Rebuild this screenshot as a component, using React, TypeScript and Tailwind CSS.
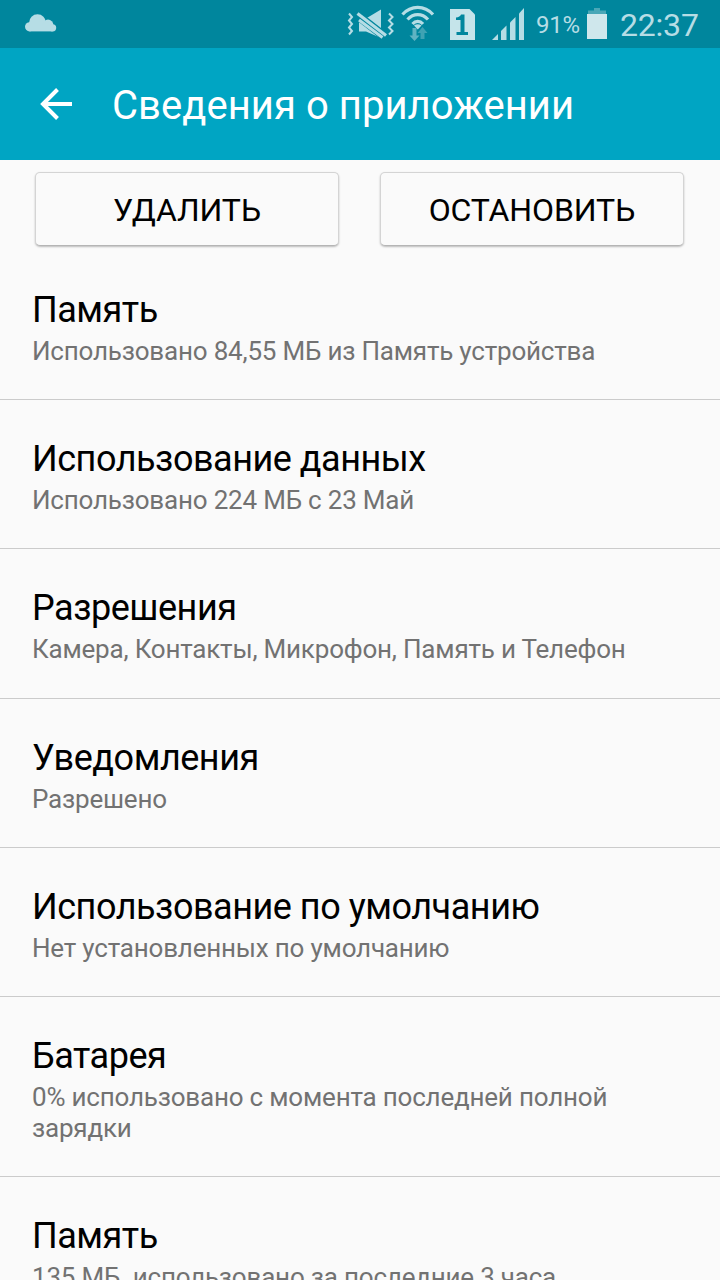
const settings = [
  { title: "Память", summary: "Использовано 84,55 МБ из Память устройства" },
  { title: "Использование данных", summary: "Использовано 224 МБ с 23 Май" },
  { title: "Разрешения", summary: "Камера, Контакты, Микрофон, Память и Телефон" },
  { title: "Уведомления", summary: "Разрешено" },
  { title: "Использование по умолчанию", summary: "Нет установленных по умолчанию" },
  { title: "Батарея", summary: "0% использовано с момента последней полной зарядки" },
  { title: "Память", summary: "135 МБ  использовано за последние 3 часа" },
];

const CloudIcon = () => (
  <svg width="32" height="18" viewBox="0 0 32 18" fill="#b6dde5">
    <circle cx="4.6" cy="12.8" r="4.6" />
    <circle cx="12.5" cy="8.6" r="8.4" />
    <circle cx="23" cy="11" r="5.4" />
    <circle cx="27.6" cy="13.8" r="3.6" />
    <rect x="4.6" y="11" width="23" height="6.4" />
  </svg>
);

const MuteIcon = () => (
  <svg width="48" height="32" viewBox="0 0 48 32" fill="none">
    <path d="M13 9.5H20L35 0.5V29L20 22.5H13Z" fill="#b6dde5" />
    <path d="M11 6L38 27" stroke="#00869d" strokeWidth="9" />
    <path d="M11.500 4.500L40 26.500" stroke="#b6dde5" strokeWidth="3.2" />
    <path d="M13 11L36.500 28.500" stroke="#b6dde5" strokeWidth="3" />
    <path d="M3 4.500L6 8L3 11.500L6 15L3 18.500L6 22L3 25.500" stroke="#b6dde5" strokeWidth="2" />
    <path d="M43 4.500L46.500 8L43 11.500L46.500 15L43 18.500L46.500 22L43 25.500" stroke="#b6dde5" strokeWidth="2" />
  </svg>
);

const WifiIcon = () => (
  <svg width="34" height="38" viewBox="0 0 34 38" fill="none">
    <g stroke="#b6dde5" strokeWidth="3.2">
      <path d="M1.500 9.500C10 0 23.500 0 32 9.500" />
      <path d="M6.500 14.500C12.500 8 21 8 27 14.500" />
      <path d="M11.500 19C14.500 15.500 19 15.500 22 19" />
    </g>
    <path d="M13 20.500Q16.800 18 20.500 20.500L16.800 24.500Z" fill="#b6dde5" />
    <path d="M11.500 23H15.500V30.500H18.500L13.500 36L8.500 30.500H11.500Z" fill="#5fb3c2" />
    <path d="M19.500 34V28H16.500L21.500 22L26.500 28H23.500V34Z" fill="#3fa2b3" />
  </svg>
);

const SimIcon = () => (
  <svg width="26" height="32" viewBox="0 0 26 32">
    <path d="M0 0H19.500L25 5.500V31H0Z" fill="#c5e4ea" />
    <path d="M6 8.500Q10 8 11 5.500H14.500V23H18V26H6.500V23H10.500V11H6Z" fill="#00869d" />
  </svg>
);

const SignalIcon = () => (
  <svg width="33" height="32" viewBox="0 0 33 32" fill="#b6dde5">
    <path d="M0 32L6 26V32Z" />
    <path d="M9 23L14.500 17.500V32H9Z" />
    <path d="M18 14.500L23.500 9V32H18Z" />
    <path d="M27 5.500L32 0V32H27Z" />
  </svg>
);

const BatteryIcon = () => (
  <svg width="20" height="32" viewBox="0 0 20 32">
    <path d="M7 0H13V2.500H19V6H1V2.500H7Z" fill="#4aa7b7" />
    <rect y="6" width="20" height="25" fill="#cfe7ec" />
  </svg>
);

const ArrowIcon = () => (
  <svg width="32" height="32" viewBox="0 0 32 32" fill="none" stroke="#fff" strokeWidth="4">
    <path d="M17.500 1.500L3 16L17.500 30.500M3 16H32" />
  </svg>
);

const StatusBar = () => (
  <div className="flex h-12 items-start bg-[#00869d] pl-[25px] text-[#b6dde5]">
    <div className="pt-3.5">
      <CloudIcon />
    </div>
    <div className="ml-[289px] pt-[9px]">
      <MuteIcon />
    </div>
    <div className="ml-[7px] pt-[5px]">
      <WifiIcon />
    </div>
    <div className="ml-[15px] pt-[9px]">
      <SimIcon />
    </div>
    <div className="ml-4 pt-2">
      <SignalIcon />
    </div>
    <span className="ml-[11px] w-[51px] pt-[9px] text-2xl/8 tracking-[-0.2px] whitespace-nowrap">91%</span>
    <div className="pt-2">
      <BatteryIcon />
    </div>
    <span className="ml-[13px] pt-[5px] text-[32px]/[40px] tracking-[-0.2px] whitespace-nowrap">22:37</span>
  </div>
);

const ActionButton = ({ label }: { label: string }) => (
  <button className="h-[74px] w-[304px] rounded-[5px] border border-[#d4d4d4] border-b-[#b5b5b5] bg-[#fafafa] pt-0.5 text-[32px]/[40px] tracking-[-0.1px] text-black shadow-[0_1px_2px_rgba(0,0,0,0.25)]">
    {label}
  </button>
);

const SettingItem = ({ title, summary }: { title: string, summary: string }) => (
  <li className="border-b border-[#cbcbcb] pt-[38px] pr-16 pb-[32.8px] pl-8">
    <div className="text-4xl/[42px] tracking-[-0.47px] text-black">{title}</div>
    <div className="mt-[5px] text-[26px]/[30.5px] tracking-[-0.2px] whitespace-pre-wrap text-[#727272]">{summary}</div>
  </li>
);

export default function App() {
  return (
    <div className="h-[1280px] w-[720px] overflow-hidden bg-[#fafafa] font-['Roboto',sans-serif]">
      <StatusBar />
      <header className="flex h-28 items-center bg-[#00a5c3] pl-10 text-white">
        <ArrowIcon />
        <h1 className="ml-10 pt-1 text-[40px]/[48px] tracking-[0.05px] whitespace-nowrap">Сведения о приложении</h1>
      </header>
      <div className="flex gap-[41px] pt-3 pb-[4.7px] pl-[35px]">
        <ActionButton label="УДАЛИТЬ" />
        <ActionButton label="ОСТАНОВИТЬ" />
      </div>
      <ul>
        {settings.map((item, i) => (
          <SettingItem key={i} {...item} />
        ))}
      </ul>
    </div>
  );
}
